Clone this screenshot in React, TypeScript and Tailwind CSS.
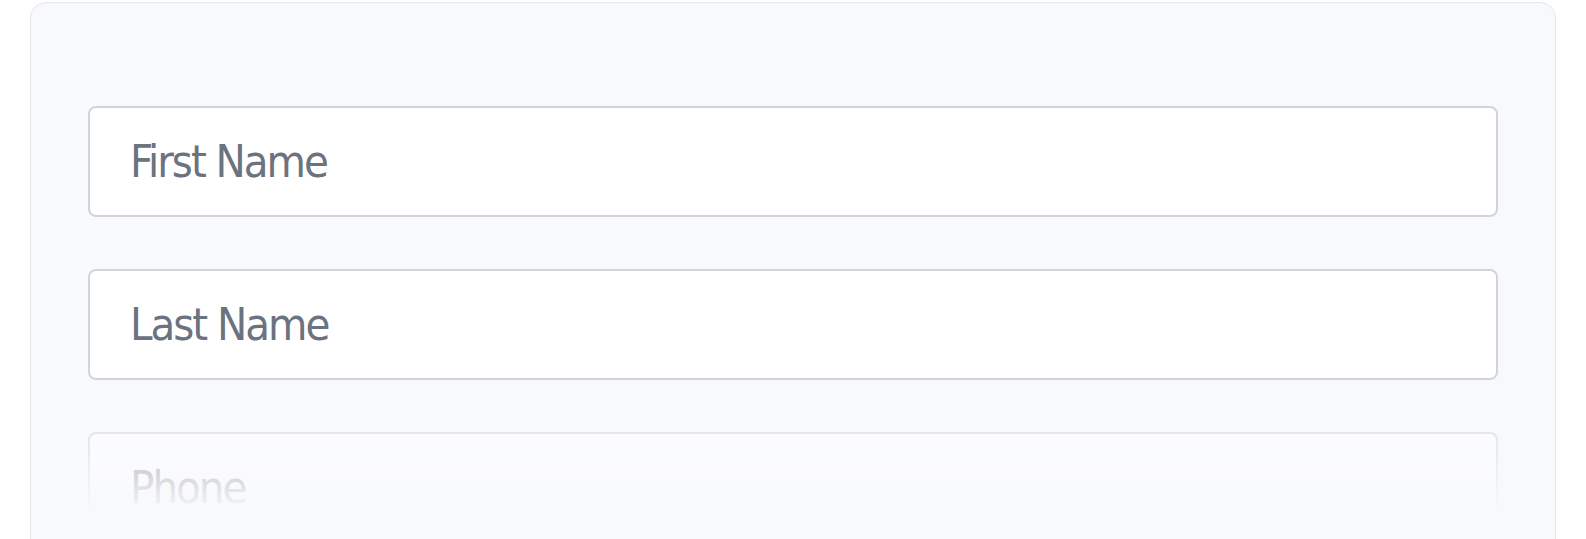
import { useState } from 'react';

const fields = ['First Name', 'Last Name', 'Phone'];

export default function App() {
  const [values, setValues] = useState<Record<string, string>>({});

  return (
    <div className="h-[539px] overflow-hidden bg-white px-[30px] pt-[2px]">
      <div className="relative h-[600px] rounded-t-2xl border border-[#e5e7eb] bg-[#f8f9fb] px-[57px] pt-[103px]">
        <form className="flex flex-col gap-[52px]">
          {fields.map((f) => (
            <input
              key={f}
              type="text"
              placeholder={f}
              value={values[f] ?? ''}
              onChange={(e) => setValues({ ...values, [f]: e.target.value })}
              className="h-[111px] w-full rounded-lg border-2 border-[#d1d5db] bg-white px-[40px] text-[45px] tracking-[-0.045em] text-[#6b7280] placeholder:text-[#6b7280] outline-none"
              style={{ fontFamily: '"DejaVu Sans Condensed", "DejaVu Sans", sans-serif' }}
            />
          ))}
        </form>
        {/* fade-out over the last field */}
        <div className="pointer-events-none absolute inset-x-0 top-[420px] h-[180px] bg-gradient-to-b from-[#f8f9fb]/40 via-[#f8f9fb] to-[#f8f9fb]" />
      </div>
    </div>
  );
}
